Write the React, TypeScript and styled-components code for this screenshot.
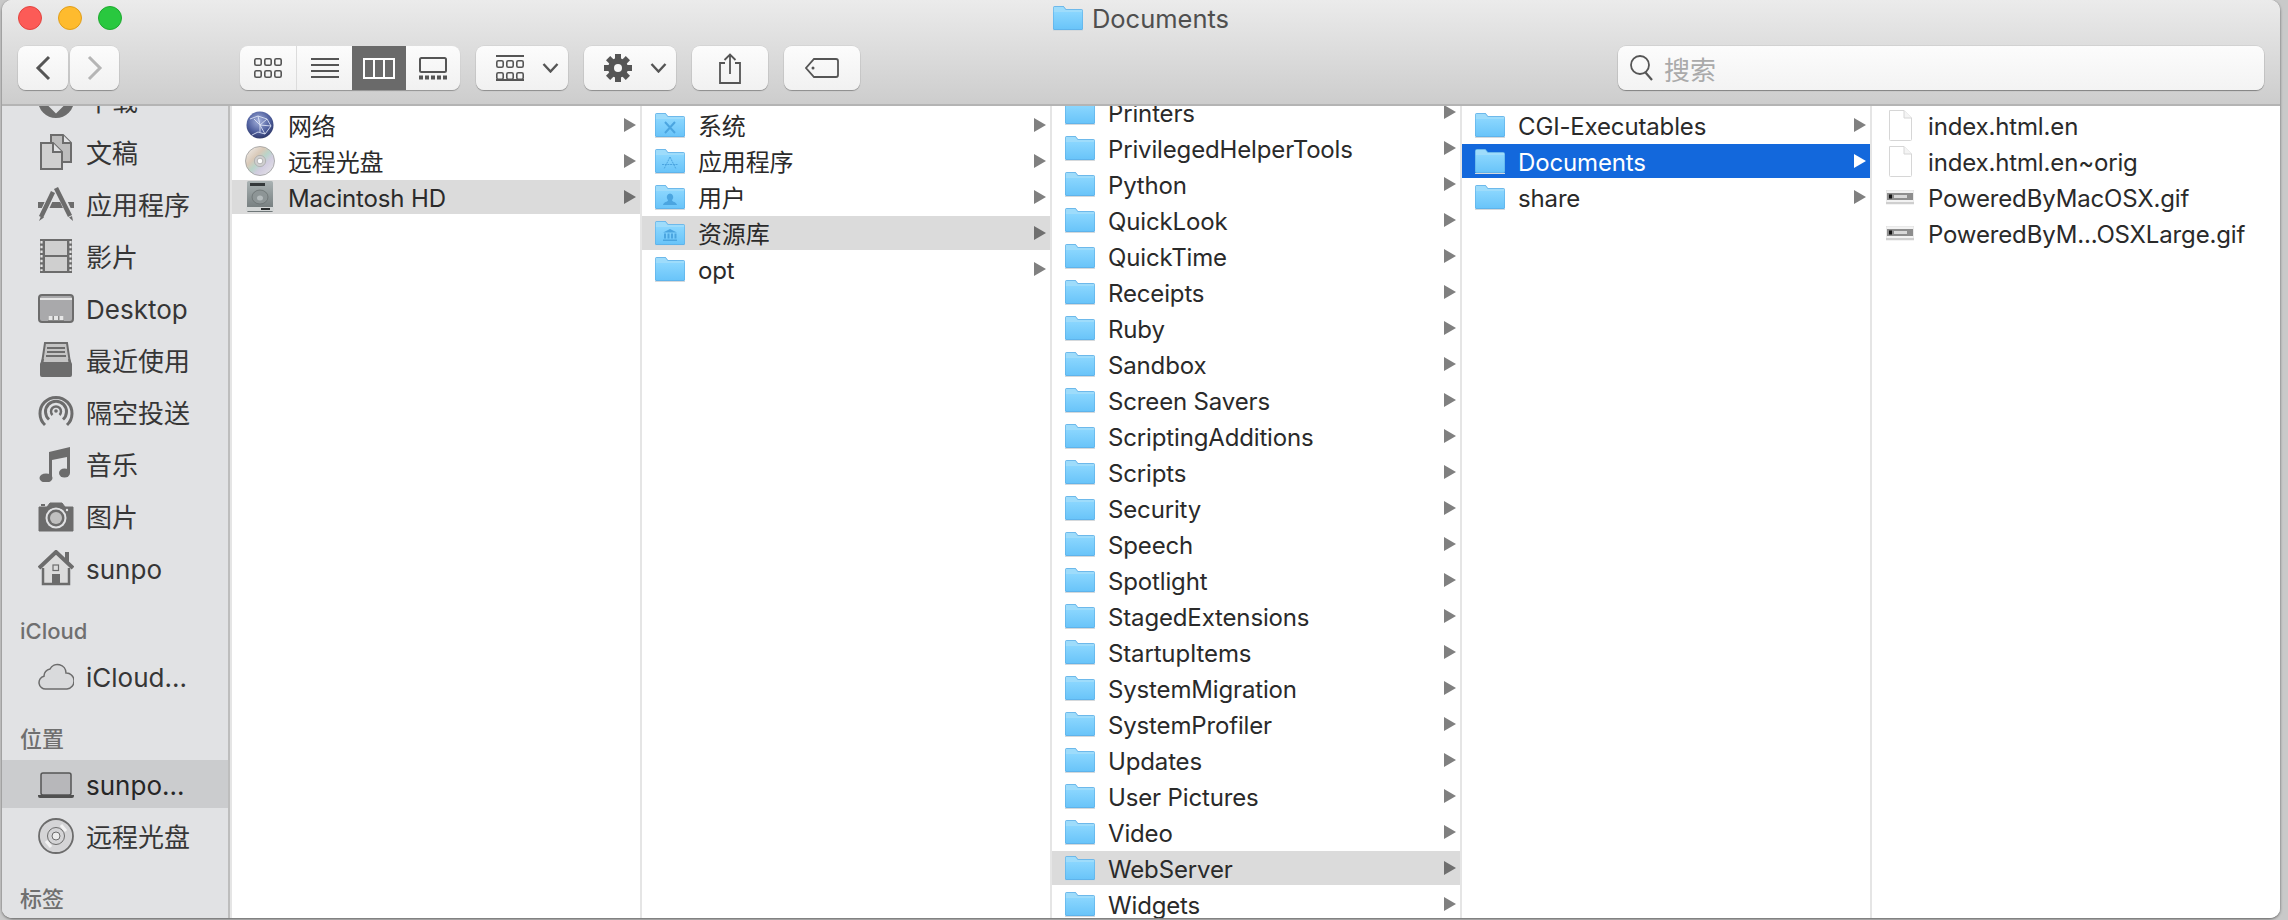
import React, {useId} from "react";
import styled, {createGlobalStyle} from "styled-components";

const FONT = `Inter, "Noto Sans CJK SC", sans-serif`

const GlobalStyle = createGlobalStyle`
  html, body {
    margin: 0;
    height: 920px;
    overflow: hidden;
    background: #c9c9c9;
    font-family: ${FONT};
  }
`

type RowState = "none" | "muted" | "active"

function FolderIcon({emblem}: { emblem?: "x" | "app" | "user" | "bank" }) {
    const id = useId()
    const ink = "#4ba5e0"
    return (
        <svg width="30" height="25" viewBox="0 0 30 25">
            <defs>
                <linearGradient id={id} x1="0" y1="0" x2="0" y2="1">
                    <stop offset="0" stopColor="#8ad6fe"/>
                    <stop offset="1" stopColor="#69c4f9"/>
                </linearGradient>
            </defs>
            <path d="M0 24h30v1H0z" fill="#d5d9dc"/>
            <path d="M0 2Q0 0 2 0h8.500l2.500 3h15q2 0 2 2v17.500q0 1.500-1.500 1.500h-27q-1.500 0-1.500-1.500z" fill="#5caee6"/>
            <path d="M.6 2Q.6.700 2 .7h8.200l2.500 3h15.500q1.200 0 1.200 1.300v1H.6z" fill="#9edcfb"/>
            <path d="M.6 6h28.800v16.300q0 .9-.9.9h-27q-.9 0-.9-.9z" fill={`url(#${id})`}/>
            {emblem === "x" && <path d="M10 9l10 11M20 9L10 20" stroke={ink} strokeWidth="2" fill="none"/>}
            {emblem === "app" && <path d="M15 8l-6 12M15 8l6 12M7 15.500h16" stroke={ink} strokeWidth="1" fill="none" strokeDasharray="2 .7"/>}
            {emblem === "user" && <path d="M15 8.500a3.500 3.800 0 0 1 2 6.700c0 1.500 4.500 1.800 5 4.800H8c.5-3 5-3.300 5-4.800a3.500 3.800 0 0 1 2-6.700z" fill={ink}/>}
            {emblem === "bank" && <path d="M15 8l7 3.500H8zM9 12.500h2v5H9zM12.500 12.500h2v5h-2zM16 12.500h2v5h-2zM19.500 12.500h2v5h-2zM8 18.500h14V20H8z" fill={ink}/>}
        </svg>
    )
}

function FileIcon() {
    return (
        <svg width="24" height="31" viewBox="0 0 24 31">
            <path d="M1.500.500H16L23.500 8v21.500q0 1-1 1h-20q-1 0-1-1z" fill="#fff" stroke="#d6d6d6"/>
            <path d="M16 .500V8h7.500" fill="#f4f4f4" stroke="#d6d6d6"/>
        </svg>
    )
}

function GifIcon() {
    return (
        <svg width="28" height="15" viewBox="0 0 28 15">
            <rect x="0" y="0" width="28" height="14" fill="#f2f2f2" stroke="#d0d0d0" strokeWidth=".5"/>
            <rect x="1" y="3" width="26" height="7" fill="#8d8d8d"/>
            <rect x="3" y="4.500" width="3" height="4" fill="#151515"/>
            <rect x="8" y="5" width="13" height="3" fill="#d8d8d8"/>
            <rect x="0" y="12" width="28" height="2" fill="#cfcfcf"/>
        </svg>
    )
}

function GlobeIcon() {
    const id = useId()
    return (
        <svg width="28" height="28" viewBox="0 0 28 28">
            <defs>
                <radialGradient id={id} cx=".45" cy=".35" r=".7">
                    <stop offset="0" stopColor="#a5b2dc"/>
                    <stop offset=".6" stopColor="#4f5f9e"/>
                    <stop offset="1" stopColor="#28315f"/>
                </radialGradient>
            </defs>
            <circle cx="14" cy="14" r="13.500" fill={`url(#${id})`}/>
            <path d="M4 8l8-3 9 3 4 7-6 8-7-2-6 3M12 5l2 9 7-6M14 14l-6-6M14 14l0 7M14 14l5 9M14 14l11 1" fill="none" stroke="#dfe6f7" strokeWidth="1" opacity=".85"/>
        </svg>
    )
}

function CdIcon() {
    const id = useId()
    return (
        <svg width="32" height="32" viewBox="0 0 32 32">
            <defs>
                <linearGradient id={id} x1="0" y1="0" x2="1" y2="1">
                    <stop offset="0" stopColor="#f3f3f3"/>
                    <stop offset=".35" stopColor="#d9c9b8"/>
                    <stop offset=".5" stopColor="#b9d4c9"/>
                    <stop offset=".65" stopColor="#d2cde0"/>
                    <stop offset="1" stopColor="#e8e8e8"/>
                </linearGradient>
            </defs>
            <circle cx="16" cy="16" r="15.500" fill={`url(#${id})`} stroke="#9a9a9a" strokeWidth=".8"/>
            <circle cx="16" cy="16" r="6" fill="#cfcfcf" stroke="#a8a8a8" strokeWidth=".8"/>
            <circle cx="16" cy="16" r="3" fill="#fff" stroke="#a0a0a0" strokeWidth=".8"/>
        </svg>
    )
}

function HdIcon() {
    const id = useId()
    return (
        <svg width="28" height="32" viewBox="0 0 28 32">
            <defs>
                <linearGradient id={id} x1="0" y1="0" x2="0" y2="1">
                    <stop offset="0" stopColor="#a9b2b3"/>
                    <stop offset="1" stopColor="#6f7778"/>
                </linearGradient>
            </defs>
            <rect x="1" y="0" width="26" height="31" rx="1.500" fill={`url(#${id})`}/>
            <rect x="4" y="2" width="15" height="3" fill="#33383a"/>
            <ellipse cx="14" cy="16" rx="8" ry="7" fill="#8d9596" stroke="#5f6667" strokeWidth=".6"/>
            <ellipse cx="14" cy="17" rx="3" ry="2.500" fill="#b5bcbd"/>
            <rect x="0" y="26" width="28" height="4" fill="#d4d7d7"/>
            <path d="M15 27h9v2h-9z" fill="#2b2f30"/>
        </svg>
    )
}

const INK = "#6c6c6c"

const sidebarIcons: Record<string, React.ReactNode> = {
    download: <>
        <circle cx="18" cy="18" r="16" fill="none" stroke={INK} strokeWidth="4"/>
        <circle cx="18" cy="18" r="15" fill={INK}/>
        <path d="M8 18l10 10 10-10" fill="none" stroke="#e1e2e4" strokeWidth="5"/>
    </>,
    docs: <>
        <path d="M13 1h12l8 8v19H13z" fill="#bdbdbd" stroke={INK} strokeWidth="2"/>
        <path d="M25 1v8h8" fill="#e1e2e4" stroke={INK} strokeWidth="2"/>
        <path d="M3 9h12l9 9v17H3z" fill="#d0d0d0" stroke={INK} strokeWidth="2"/>
        <path d="M15 9v9h9" fill="#e1e2e4" stroke={INK} strokeWidth="2"/>
    </>,
    apps: <>
        <path d="M0 16h36v6H0z" fill={INK}/>
        <path d="M16 4L3 32M19 1l14 30" fill="none" stroke="#e1e2e4" strokeWidth="7"/>
        <path d="M15 6L3 31M18 2l14 28" fill="none" stroke={INK} strokeWidth="4.500"/>
        <path d="M1 35l2-5 3 1.500zM35 35l-1-5-3 1.500z" fill={INK}/>
    </>,
    film: <>
        <rect x="2" y="1" width="32" height="34" fill={INK}/>
        <rect x="7" y="3" width="22" height="14" fill="#cfcfcf"/>
        <rect x="7" y="19" width="22" height="14" fill="#cfcfcf"/>
        <path d="M3.500 3v30M32.500 3v30" stroke="#e4e4e4" strokeWidth="2.200" strokeDasharray="2.500 2.200"/>
    </>,
    desktop: <>
        <rect x="1" y="5" width="34" height="27" rx="3" fill="#a9a9ab" stroke={INK} strokeWidth="2"/>
        <path d="M2 9h32" stroke="#e6e6e6" strokeWidth="2"/>
        <rect x="10" y="26" width="16" height="5" fill="#8a8a8a"/>
        <path d="M10.500 26h4v4h-4zM16 26h4v4h-4zM21.500 26h4v4h-4z" fill="#e6e6e6"/>
    </>,
    recent: <>
        <path d="M7 1h22l3 20H4z" fill="#c4c4c4" stroke={INK} strokeWidth="2"/>
        <path d="M9 6h18M9 10h18M8 14h20" stroke={INK} strokeWidth="1.800"/>
        <path d="M2 22l2-5h2l-1 5h26l-1-5h2l2 5v11q0 2-2 2H4q-2 0-2-2z" fill={INK}/>
    </>,
    airdrop: <>
        <path d="M7 31A16 16 0 1 1 29 31" fill="none" stroke={INK} strokeWidth="3"/>
        <path d="M11 25.500A10.500 10.500 0 1 1 25 25.500" fill="none" stroke={INK} strokeWidth="3"/>
        <path d="M14.500 21A5 5 0 1 1 21.500 21" fill="none" stroke={INK} strokeWidth="2.500"/>
        <circle cx="18" cy="17" r="1.800" fill={INK}/>
    </>,
    music: <>
        <path d="M11 6L32 1v26h-3V11l-15 3v19h-3z" fill={INK}/>
        <ellipse cx="8" cy="32" rx="6.500" ry="4.500" fill={INK}/>
        <ellipse cx="26.500" cy="27" rx="5.500" ry="4.500" fill={INK}/>
    </>,
    pictures: <>
        <path d="M1 9h8l3-4h12l3 4h8v24H1z" fill={INK} stroke={INK}/>
        <path d="M3 6h4v2H3z" fill={INK}/>
        <circle cx="18" cy="20" r="10.500" fill="#e1e2e4"/>
        <circle cx="18" cy="20" r="8.500" fill={INK}/>
        <circle cx="18" cy="20" r="6" fill="#c0c0c0"/>
        <circle cx="29" cy="12" r="1.200" fill="#e1e2e4"/>
    </>,
    home: <>
        <path d="M5 17v17h26V17" fill="#dcdcdc" stroke={INK} strokeWidth="2.500"/>
        <path d="M1 18L18 2l17 16" fill="#dcdcdc" stroke={INK} strokeWidth="4"/>
        <path d="M27 2h4v11h-4z" fill={INK}/>
        <rect x="15" y="15" width="5.500" height="5.500" fill="none" stroke={INK} strokeWidth="1.200"/>
        <rect x="14" y="24" width="8" height="10" fill={INK}/>
    </>,
    cloud: <path d="M9 31H8a6.500 6.500 0 0 1-2-12.800A7 7 0 0 1 12 11a8.500 8.500 0 0 1 16 4 7.500 8 0 0 1 1 16z" fill="#d9dadc" stroke={INK} strokeWidth="1.500"/>,
    laptop: <>
        <rect x="3" y="7" width="30" height="22" rx="2" fill="#b7b7ba" stroke="#555" strokeWidth="1.500"/>
        <path d="M0 29h36v1q0 2-2 2H2q-2 0-2-2z" fill="#505050"/>
    </>,
    disc: <>
        <circle cx="18" cy="18" r="17" fill="#d4d4d6" stroke={INK} strokeWidth="1.800"/>
        <circle cx="18" cy="18" r="8.500" fill="none" stroke={INK} strokeWidth="1"/>
        <circle cx="18" cy="18" r="4" fill="#ebebeb" stroke={INK} strokeWidth="1"/>
        <path d="M23 7l5 6M8 23l5 6" stroke="#f2f2f2" strokeWidth="3"/>
    </>
}

function SidebarItem({name, label, selected}: { name: string, label: string, selected?: boolean }) {
    return (
        <SidebarRow $selected={selected}>
            <svg width="36" height="36" viewBox="0 0 36 36">{sidebarIcons[name]}</svg>
            <SidebarLabel>{label}</SidebarLabel>
        </SidebarRow>
    )
}

function Gear() {
    return (
        <svg width="28" height="28" viewBox="0 0 28 28">
            {[0, 45, 90, 135, 180, 225, 270, 315].map(angle =>
                <rect key={angle} x="11" y="0" width="6" height="7" fill="#555" transform={`rotate(${angle} 14 14)`}/>)}
            <circle cx="14" cy="14" r="10" fill="#555"/>
            <circle cx="14" cy="14" r="4" fill="#f6f6f6"/>
        </svg>
    )
}

function Chevron() {
    return (
        <svg width="17" height="10" viewBox="0 0 17 10">
            <path d="M1.500 1l7 7.500 7-7.500" fill="none" stroke="#555" strokeWidth="2.400"/>
        </svg>
    )
}

function MiniGrid({color = "#555"}: { color?: string }) {
    const cells = [0, 1].flatMap(r => [0, 10, 20].map(x => ({x, y: r * 12})))
    return (
        <>
            {cells.map(c => <rect key={`${c.x}-${c.y}`} x={c.x + .8} y={c.y + .8} width="6.400" height="6.400" rx="1.500"
                                  fill="none" stroke={color} strokeWidth="1.600"/>)}
        </>
    )
}

interface ColumnItem {
    name: string
    icon: React.ReactNode
    state?: RowState
    arrow?: boolean
}

const folder = (name: string, state?: RowState, emblem?: "x" | "app" | "user" | "bank"): ColumnItem =>
    ({name, icon: <FolderIcon emblem={emblem}/>, state, arrow: true})

const rootColumn: ColumnItem[] = [
    {name: "网络", icon: <GlobeIcon/>, arrow: true},
    {name: "远程光盘", icon: <CdIcon/>, arrow: true},
    {name: "Macintosh HD", icon: <HdIcon/>, arrow: true, state: "muted"},
]

const diskColumn: ColumnItem[] = [
    folder("系统", "none", "x"),
    folder("应用程序", "none", "app"),
    folder("用户", "none", "user"),
    folder("资源库", "muted", "bank"),
    folder("opt"),
]

const libraryColumn: ColumnItem[] = [
    "Printers", "PrivilegedHelperTools", "Python", "QuickLook", "QuickTime", "Receipts", "Ruby", "Sandbox",
    "Screen Savers", "ScriptingAdditions", "Scripts", "Security", "Speech", "Spotlight", "StagedExtensions",
    "StartupItems", "SystemMigration", "SystemProfiler", "Updates", "User Pictures", "Video",
].map(name => folder(name)).concat([folder("WebServer", "muted"), folder("Widgets")])

const webServerColumn: ColumnItem[] = [
    folder("CGI-Executables"),
    folder("Documents", "active"),
    folder("share"),
]

const documentsColumn: ColumnItem[] = [
    {name: "index.html.en", icon: <FileIcon/>},
    {name: "index.html.en~orig", icon: <FileIcon/>},
    {name: "PoweredByMacOSX.gif", icon: <GifIcon/>},
    {name: "PoweredByM...OSXLarge.gif", icon: <GifIcon/>},
]

const columns = [rootColumn, diskColumn, libraryColumn, webServerColumn, documentsColumn]

export default function App() {
    return (
        <Window>
            <GlobalStyle/>
            <Header>
                <TitleBar>
                    <Lights>
                        <Light $fill="#fc5b57" $edge="#e2443f"/>
                        <Light $fill="#febb2e" $edge="#e09e1a"/>
                        <Light $fill="#29c83f" $edge="#1ea92f"/>
                    </Lights>
                    <Title><FolderIcon/>Documents</Title>
                    <span/>
                </TitleBar>
                <Toolbar>
                    <NavGroup>
                        <ToolButton $width={50}>
                            <svg width="16" height="26" viewBox="0 0 16 26">
                                <path d="M14 2L3 13l11 11" fill="none" stroke="#555" strokeWidth="3"/>
                            </svg>
                        </ToolButton>
                        <ToolButton $width={49}>
                            <svg width="16" height="26" viewBox="0 0 16 26">
                                <path d="M2 2l11 11L2 24" fill="none" stroke="#b5b5b5" strokeWidth="3"/>
                            </svg>
                        </ToolButton>
                    </NavGroup>
                    <ViewGroup>
                        <ViewSegment $width={57}>
                            <svg width="28" height="20" viewBox="0 0 28 20"><MiniGrid/></svg>
                        </ViewSegment>
                        <ViewSegment $width={55}>
                            <svg width="28" height="20" viewBox="0 0 28 20">
                                <path d="M0 1h28M0 7h28M0 13h28M0 19h28" stroke="#555" strokeWidth="2"/>
                            </svg>
                        </ViewSegment>
                        <ViewSegment $width={54} $selected>
                            <svg width="32" height="21" viewBox="0 0 32 21">
                                <path d="M1 1h30v19H1zM11 1v19M21 1v19" fill="none" stroke="#fff" strokeWidth="2"/>
                            </svg>
                        </ViewSegment>
                        <ViewSegment $width={54}>
                            <svg width="28" height="23" viewBox="0 0 28 23">
                                <rect x="1" y="1" width="26" height="14" rx="1.500" fill="none" stroke="#555" strokeWidth="2"/>
                                <path d="M0 20.500h28" stroke="#555" strokeWidth="4" strokeDasharray="4 2"/>
                            </svg>
                        </ViewSegment>
                    </ViewGroup>
                    <ToolButton $width={92} $menu>
                        <svg width="28" height="26" viewBox="0 0 28 26">
                            <path d="M0 1h28M0 25h28" stroke="#555" strokeWidth="2"/>
                            <g transform="translate(0 5)"><MiniGrid/></g>
                        </svg>
                        <Chevron/>
                    </ToolButton>
                    <ToolButton $width={92} $menu>
                        <Gear/>
                        <Chevron/>
                    </ToolButton>
                    <ToolButton $width={76}>
                        <svg width="22" height="31" viewBox="0 0 22 31">
                            <path d="M6 10H1v20h20V10h-5" fill="none" stroke="#555" strokeWidth="1.800"/>
                            <path d="M11 21V2M5.500 7L11 1.500 16.500 7" fill="none" stroke="#555" strokeWidth="1.800"/>
                        </svg>
                    </ToolButton>
                    <ToolButton $width={76}>
                        <svg width="34" height="20" viewBox="0 0 34 20">
                            <path d="M9 1h22q2 0 2 2v14q0 2-2 2H9l-8-9z" fill="none" stroke="#555" strokeWidth="1.800"/>
                            <circle cx="8" cy="10" r="1.500" fill="#555"/>
                        </svg>
                    </ToolButton>
                    <SearchBox>
                        <svg width="26" height="26" viewBox="0 0 26 26">
                            <circle cx="11" cy="10" r="9" fill="none" stroke="#555" strokeWidth="1.800"/>
                            <path d="M16.500 17.500L23 25" stroke="#555" strokeWidth="2.200"/>
                        </svg>
                        <SearchHint>搜索</SearchHint>
                    </SearchBox>
                </Toolbar>
            </Header>
            <Body>
                <Sidebar>
                    <SidebarList>
                        <SidebarItem name="download" label="下载"/>
                        <SidebarItem name="docs" label="文稿"/>
                        <SidebarItem name="apps" label="应用程序"/>
                        <SidebarItem name="film" label="影片"/>
                        <SidebarItem name="desktop" label="Desktop"/>
                        <SidebarItem name="recent" label="最近使用"/>
                        <SidebarItem name="airdrop" label="隔空投送"/>
                        <SidebarItem name="music" label="音乐"/>
                        <SidebarItem name="pictures" label="图片"/>
                        <SidebarItem name="home" label="sunpo"/>
                        <SectionTitle>iCloud</SectionTitle>
                        <SidebarItem name="cloud" label="iCloud..."/>
                        <SectionTitle>位置</SectionTitle>
                        <SidebarItem name="laptop" label="sunpo..." selected/>
                        <SidebarItem name="disc" label="远程光盘"/>
                        <SectionTitle>标签</SectionTitle>
                    </SidebarList>
                </Sidebar>
                {columns.map((items, index) => (
                    <Column key={index}>
                        <ColumnList $scrolled={items === libraryColumn}>
                            {items.map(item => (
                                <Row key={item.name} $state={item.state ?? "none"}>
                                    <RowIcon>{item.icon}</RowIcon>
                                    <RowName>{item.name}</RowName>
                                    {item.arrow && <Arrow $state={item.state ?? "none"}/>}
                                </Row>
                            ))}
                        </ColumnList>
                    </Column>
                ))}
            </Body>
        </Window>
    )
}

const Window = styled.div`
  display: flex;
  flex-direction: column;
  width: 2278px;
  height: 918px;
  margin-left: 2px;
  border-radius: 10px;
  overflow: hidden;
  background: #fff;
  box-shadow: 0 1px 3px rgba(0, 0, 0, .55);
`

const Header = styled.header`
  flex: none;
  height: 106px;
  box-sizing: border-box;
  padding: 0 16px;
  background: linear-gradient(#ebebeb, #cdcdcd);
  border-bottom: 2px solid #b4b4b4;
`

const TitleBar = styled.div`
  display: grid;
  grid-template-columns: 1fr auto 1fr;
  align-items: center;
  height: 36px;
`

const Lights = styled.div`
  display: flex;
  gap: 16px;
`

const Light = styled.span<{ $fill: string, $edge: string }>`
  width: 24px;
  height: 24px;
  box-sizing: border-box;
  border-radius: 50%;
  background: ${p => p.$fill};
  border: 1px solid ${p => p.$edge};
`

const Title = styled.div`
  display: flex;
  align-items: center;
  gap: 9px;
  font-size: 25.500px;
  color: #4f4f4f;
`

const Toolbar = styled.div`
  display: flex;
  align-items: center;
  gap: 16px;
  height: 44px;
  margin-top: 10px;
`

const NavGroup = styled.div`
  display: flex;
  gap: 2px;
  margin-right: 105px;
`

const ToolButton = styled.button<{ $width: number, $menu?: boolean }>`
  display: flex;
  align-items: center;
  justify-content: ${p => p.$menu ? "flex-start" : "center"};
  gap: 18px;
  box-sizing: border-box;
  width: ${p => p.$width}px;
  height: 44px;
  padding: 0 0 0 ${p => p.$menu ? "20px" : "0"};
  border: none;
  border-radius: 8px;
  background: linear-gradient(#fcfcfc, #f1f1f1);
  box-shadow: 0 1px 1px rgba(0, 0, 0, .3), 0 0 0 .5px rgba(0, 0, 0, .08);
`

const ViewGroup = styled.div`
  display: flex;
  height: 44px;
  border-radius: 8px;
  overflow: hidden;
  background: linear-gradient(#fcfcfc, #f1f1f1);
  box-shadow: 0 1px 1px rgba(0, 0, 0, .3);
`

const ViewSegment = styled.div<{ $width: number, $selected?: boolean }>`
  display: flex;
  align-items: center;
  justify-content: center;
  box-sizing: border-box;
  width: ${p => p.$width}px;
  background: ${p => p.$selected ? "#6a6a6a" : "transparent"};

  &:first-child {
    border-right: 1px solid #dcdcdc;
  }
`

const SearchBox = styled.div`
  display: flex;
  align-items: center;
  gap: 9px;
  width: 646px;
  height: 44px;
  box-sizing: border-box;
  padding-left: 11px;
  margin-left: auto;
  border-radius: 8px;
  background: linear-gradient(#fcfcfc, #f3f3f3);
  box-shadow: 0 1px 1px rgba(0, 0, 0, .35), 0 0 0 .5px rgba(0, 0, 0, .1);
`

const SearchHint = styled.span`
  font-size: 26px;
  color: #aaa;
`

const Body = styled.main`
  flex: 1;
  min-height: 0;
  display: flex;
  gap: 2px;
  background: #e5e5e5;
`

const Sidebar = styled.aside`
  flex: none;
  box-sizing: border-box;
  width: 228px;
  overflow: hidden;
  background: #e1e2e4;
  border-right: 2px solid #bdbdbd;
`

const SidebarList = styled.div`
  display: flex;
  flex-direction: column;
  gap: 4px;
  margin-top: -30px;
`

const SidebarRow = styled.div<{ $selected?: boolean }>`
  flex: none;
  display: flex;
  align-items: center;
  gap: 12px;
  height: 48px;
  padding-left: 36px;
  font-size: 26px;
  color: ${p => p.$selected ? "#262626" : "#363636"};
  background: ${p => p.$selected ? "#cbccce" : "transparent"};
`

const SidebarLabel = styled.span`
  margin-top: 3px;
  line-height: 40px;
`

const SectionTitle = styled.div`
  flex: none;
  height: 52px;
  box-sizing: border-box;
  padding: 23px 0 0 18px;
  line-height: 24px;
  font-size: 22px;
  font-weight: 500;
  color: #6f6f6f;
`

const Column = styled.section`
  flex: 1;
  min-width: 0;
  overflow: hidden;
  background: #fff;
`

const ColumnList = styled.div<{ $scrolled?: boolean }>`
  display: flex;
  flex-direction: column;
  gap: 2px;
  margin-top: ${p => p.$scrolled ? "-11px" : "2px"};
`

const Row = styled.div<{ $state: RowState }>`
  flex: none;
  display: flex;
  align-items: center;
  gap: 13px;
  height: 34px;
  padding: 0 4px 0 13px;
  font-size: 24px;
  letter-spacing: -.15px;
  color: ${p => p.$state === "active" ? "#fff" : "#2a2a2a"};
  background: ${p => p.$state === "active" ? "#1368dc" : p.$state === "muted" ? "#dbdbdb" : "transparent"};
`

const RowIcon = styled.span`
  flex: none;
  display: flex;
  align-items: center;
  justify-content: center;
  width: 30px;
`

const RowName = styled.span`
  flex: 1;
  margin-top: 3px;
  line-height: 30px;
  white-space: nowrap;
`

const Arrow = styled.span<{ $state: RowState }>`
  width: 0;
  height: 0;
  border-style: solid;
  border-width: 7px 0 7px 12px;
  border-color: transparent transparent transparent ${p => p.$state === "active" ? "#fff" : p.$state === "muted" ? "#6f6f6f" : "#808080"};
`
